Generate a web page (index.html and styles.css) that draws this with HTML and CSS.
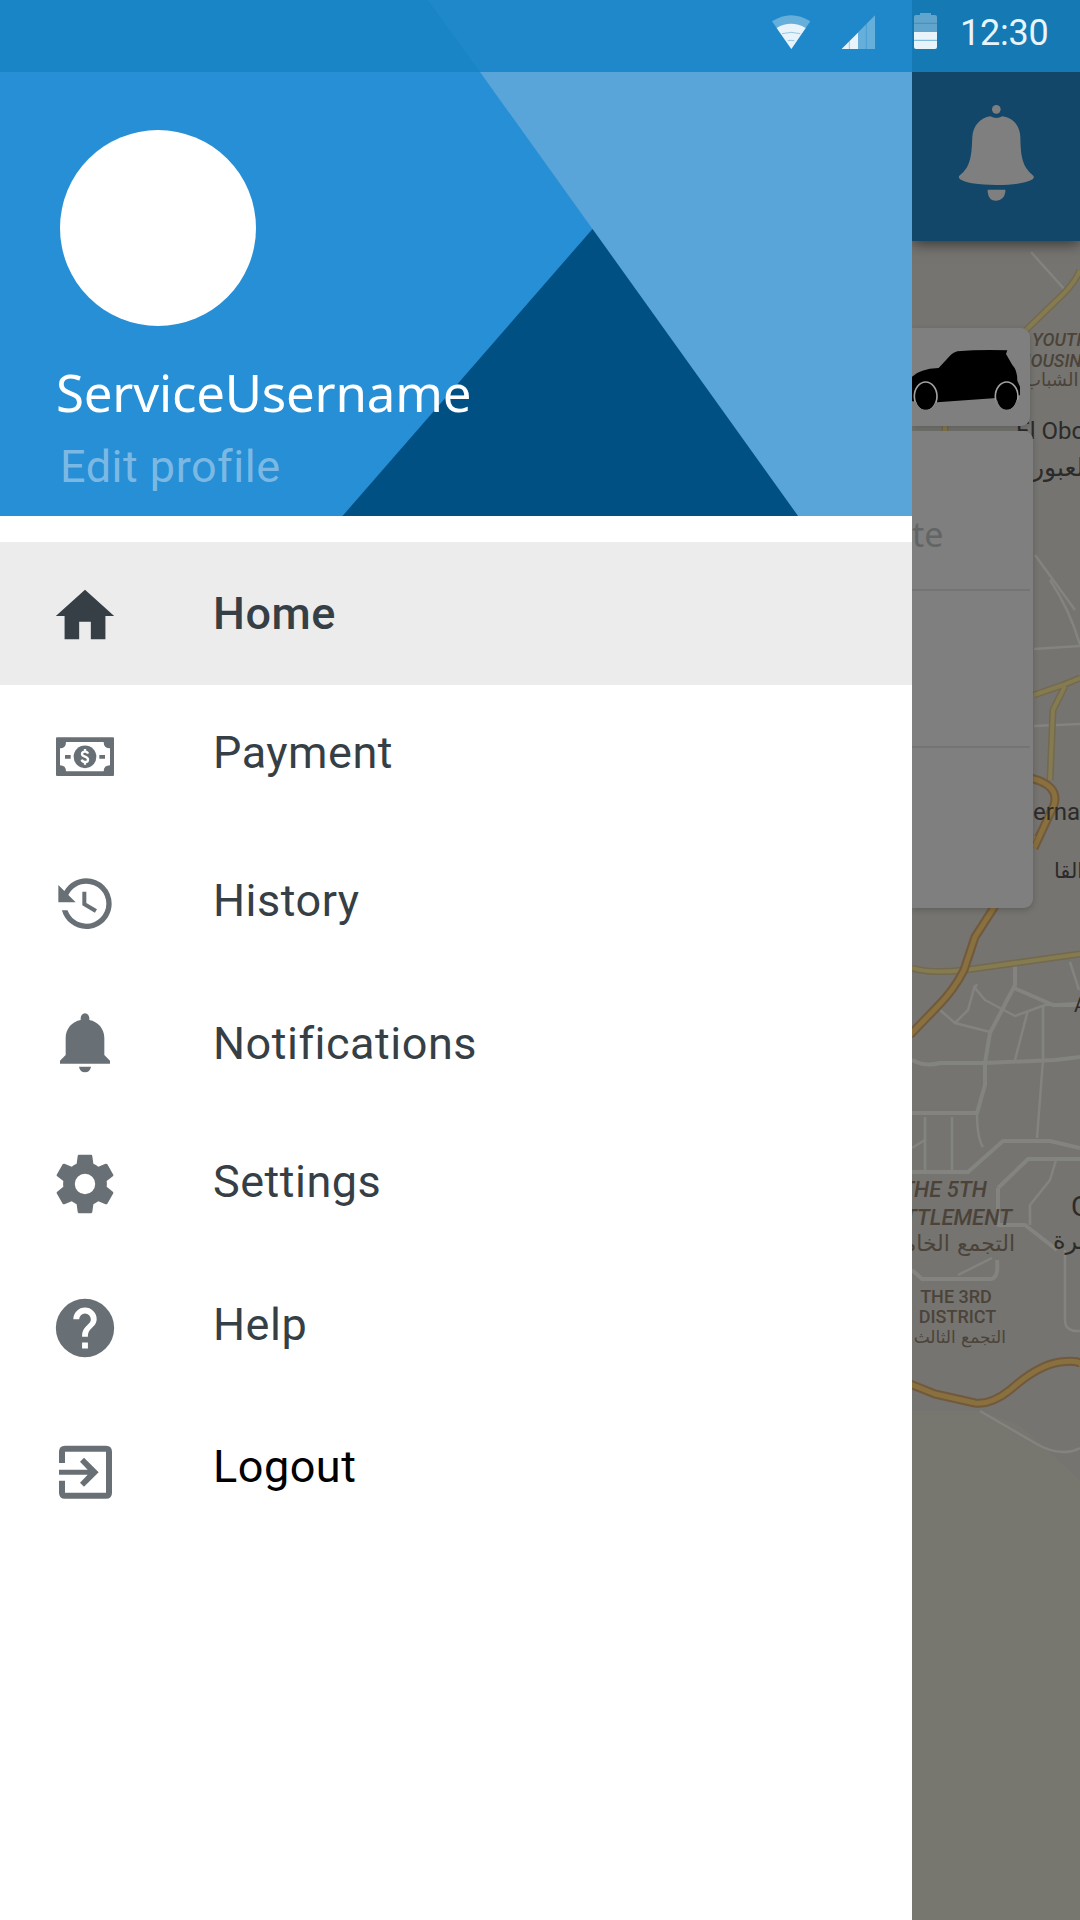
FILE: index.html
```html
<!DOCTYPE html>
<html lang="en">
<head>
<meta charset="utf-8">
<title>Navigation drawer</title>
<link rel="stylesheet" href="styles.css">
</head>
<body>
<div class="screen">
  <header class="status">
    <svg class="status-icons" viewBox="0 0 600 216">
      <g fill="#e8f3fa">
        <path opacity=".36" d="M96 64Q153 28 211 64L154 147Z"/>
        <path d="M110 84Q153 59 197 84L154 147Z"/>
        <path opacity=".36" d="M405 46V147H305Z"/>
        <path d="M354 98V147H305Z"/>
        <path opacity=".36" d="M540 39H573V45H585Q591 45 591 51V96H522V51Q522 45 528 45H540Z"/>
        <path d="M522 96H591V141Q591 147 585 147H528Q522 147 522 141Z"/>
      </g>
      <g fill="none" stroke="#1e86c6" stroke-width="2" opacity=".6">
        <path d="M126 101Q153 93 181 101M143 122Q153 120 163 122M328 124V147M379 72V147"/>
        <path stroke-width="3" d="M522 70H591M522 121H591"/>
      </g>
    </svg>
    <time class="clock">12:30</time>
  </header>

  <aside class="drawer">
    <section class="profile">
      <div class="avatar"></div>
      <h1 class="name">ServiceUsername</h1>
      <a class="edit">Edit profile</a>
    </section>
    <nav class="menu">
      <a class="item home">
        <svg class="icon" viewBox="0 0 24 24"><path d="M10 20V14H14V20H19V12H22L12 3 2 12H5V20Z"/></svg>
        <span class="label">Home</span>
      </a>
      <a class="item payment">
        <svg class="icon" viewBox="150 545 210 210">
          <path fill-rule="evenodd" d="M171 591H339Q342 591 342 594V704Q342 707 339 707H171Q168 707 168 704V594Q168 591 171 591ZM198 605Q198 624 180 624V675Q198 675 198 693H311Q311 675 330 675V624Q311 624 311 605Z"/>
          <path d="M195 644H212V655H195ZM298 644H315V655H298Z"/>
          <circle cx="255" cy="649.500" r="34"/>
          <path fill="none" stroke="#fff" stroke-width="7" d="M264 640Q262 634 255 634 246 634 246 641 246 646 255 649 264 652 264 658 264 665 255 665 247 665 245 658M255 626V635M255 664V673"/>
        </svg>
        <span class="label">Payment</span>
      </a>
      <a class="item history">
        <svg class="icon small" viewBox="0 0 24 24"><path d="M11 7V12.110L15.710 14.900 16.500 13.620 12.500 11.250V7M12.500 2C8.970 2 5.910 3.920 4.270 6.770L2 4.500V11H8.500L5.750 8.250C6.960 5.730 9.500 4 12.500 4A7.500 7.500 0 0 1 20 11.500 7.500 7.500 0 0 1 12.500 19C9.230 19 6.470 16.910 5.440 14H3.340C4.440 18.030 8.110 21 12.500 21 17.740 21 22 16.750 22 11.500A9.500 9.500 0 0 0 12.500 2Z"/></svg>
        <span class="label">History</span>
      </a>
      <a class="item notifications">
        <svg class="icon" viewBox="150 564 210 210"><path d="M255 580Q267 582 268 594V600C294 605 313 626 313 654V705L330 722V731H180V722L197 705V654C197 626 216 605 242 600V594Q243 582 255 580ZM237 740H273Q270 757 255 757T237 740Z"/></svg>
        <span class="label">Notifications</span>
      </a>
      <a class="item settings">
        <svg class="icon" viewBox="0 0 24 24"><path d="M12 15.500A3.500 3.500 0 0 1 8.500 12 3.500 3.500 0 0 1 12 8.500 3.500 3.500 0 0 1 15.500 12 3.500 3.500 0 0 1 12 15.500M19.430 12.970C19.470 12.650 19.500 12.330 19.500 12S19.470 11.340 19.430 11L21.540 9.370C21.730 9.220 21.780 8.950 21.660 8.730L19.660 5.270C19.540 5.050 19.270 4.960 19.050 5.050L16.560 6.050C16.040 5.660 15.500 5.320 14.870 5.070L14.500 2.420C14.460 2.180 14.250 2 14 2H10C9.750 2 9.540 2.180 9.500 2.420L9.130 5.070C8.500 5.320 7.960 5.660 7.440 6.050L4.950 5.050C4.730 4.960 4.460 5.050 4.340 5.270L2.340 8.730C2.210 8.950 2.270 9.220 2.460 9.370L4.570 11C4.530 11.340 4.500 11.670 4.500 12S4.530 12.650 4.570 12.970L2.460 14.630C2.270 14.780 2.210 15.050 2.340 15.270L4.340 18.730C4.460 18.950 4.730 19.030 4.950 18.950L7.440 17.940C7.960 18.340 8.500 18.680 9.130 18.930L9.500 21.580C9.540 21.820 9.750 22 10 22H14C14.250 22 14.460 21.820 14.500 21.580L14.870 18.930C15.500 18.670 16.040 18.340 16.560 17.940L19.050 18.950C19.270 19.030 19.540 18.950 19.660 18.730L21.660 15.270C21.780 15.050 21.730 14.780 21.540 14.630Z"/></svg>
        <span class="label">Settings</span>
      </a>
      <a class="item help">
        <svg class="icon" viewBox="0 0 24 24"><path d="M15.070 11.250L14.170 12.170C13.450 12.890 13 13.500 13 15H11V14.500C11 13.390 11.450 12.390 12.170 11.670L13.410 10.410C13.780 10.050 14 9.550 14 9A2 2 0 0 0 12 7 2 2 0 0 0 10 9H8A4 4 0 0 1 12 5 4 4 0 0 1 16 9C16 9.880 15.640 10.670 15.070 11.250M13 19H11V17H13M12 2A10 10 0 0 0 2 12 10 10 0 0 0 12 22 10 10 0 0 0 22 12 10 10 0 0 0 12 2Z"/></svg>
        <span class="label">Help</span>
      </a>
      <a class="item logout">
        <svg class="icon" viewBox="150 1009 210 210">
          <path d="M177 1087V1053Q177 1035 195 1035H318Q336 1035 336 1053V1176Q336 1194 318 1194H195Q177 1194 177 1176V1140H195V1176H318V1053H195V1087Z"/>
          <path d="M177 1107H263L240 1083 252 1071 296 1114.500 252 1158 240 1146 263 1122H177Z"/>
        </svg>
        <span class="label">Logout</span>
      </a>
    </nav>
  </aside>

  <main class="app">
    <div class="appbar">
      <svg class="bell" viewBox="650 310 236 300">
        <circle cx="768" cy="329" r="13"/>
        <path d="M750 350Q768 360 786 350C818 353 839 380 840 411C841 455 843 480 857 504Q866 518 879 528Q883 533 877 539Q850 556 768 556T659 539Q653 533 657 528Q670 518 679 504C693 480 694 455 696 411C698 380 720 353 750 350Z"/>
        <path d="M742 570H795V577Q791 602 768 603T742 577Z"/>
      </svg>
    </div>
    <div class="content">
      <svg class="map" viewBox="912 241 168 1679">
        <path fill="#757470" d="M912 241H1080V1480L1050 1452 1020 1425 980 1411H912Z"/>
        <g class="minor">
          <path d="M1031 252 1065 290M1035 555 1075 610M1050 580Q1070 610 1080 645M1034 649 1080 646M1034 726 1080 724"/>
          <path d="M977 984 975 988 985 1000 1015 1016 1045 1005 1080 1003M1014 988 1015 962M1070 962 1079 990" />
          <path stroke-width="4" d="M1015 965V985L990 1033 985 1063V1085L977 1113H912M1014 988 1053 1005H1080M912 1060Q925 1067 940 1063H985L1055 1060 1080 1057"/>
          <path d="M940 1010 955 1023 990 1032M1043 1005V1060L1037 1138M1028 1010 1015 1060M977 1113Q977 1138 983 1147M925 1117V1170M952 1117V1170M912 1148 925 1140M975 985 968 1010 955 1023"/>
          <path stroke-width="4" d="M912 1172H968L1003 1141H1050L1080 1148M998 1188 1028 1159H1080M998 1188V1225H1025L1057 1250M997 1260Q999 1279 990 1279H922L912 1270"/>
          <path d="M1056 1160 1050 1180 1030 1205V1225M958 1275 992 1258M1065 1250V1320Q1065 1332 1080 1331M980 1411 1035 1443Q1060 1458 1080 1448"/>
        </g>
        <g class="major">
          <path class="edge" d="M1080 270Q1075 284 1055 302L1026 330M1034 695 1063 685 1080 678M1065 686 1053 710 1050 780M912 968Q930 974 965 970L1080 954M945 426V432"/>
          <path d="M1080 270Q1075 284 1055 302L1026 330M1034 695 1063 685 1080 678M1065 686 1053 710 1050 780M912 968Q930 974 965 970L1080 954M945 426V432"/>
        </g>
        <g class="highway">
          <path class="edge" d="M1030 778Q1060 785 1054 805L1034 848M1034 835 993 909 975 937 964 970Q954 990 937 1007L910 1035M910 1384 935 1394 975 1403Q991 1405 1010 1390 1038 1365 1060 1362T1082 1367"/>
          <path d="M1030 778Q1060 785 1054 805L1034 848M1034 835 993 909 975 937 964 970Q954 990 937 1007L910 1035M910 1384 935 1394 975 1403Q991 1405 1010 1390 1038 1365 1060 1362T1082 1367"/>
        </g>
        <g class="area">
          <text x="1032" y="346" font-size="18">YOUTH</text>
          <text x="1018" y="367" font-size="18">HOUSING</text>
          <text x="987" y="1197" font-size="22" text-anchor="end">THE 5TH</text>
          <text x="1012" y="1225" font-size="22" text-anchor="end">SETTLEMENT</text>
          <text class="upright" x="956" y="1303" font-size="18" text-anchor="middle">THE 3RD</text>
          <text class="upright" x="957.500" y="1323" font-size="18" text-anchor="middle">DISTRICT</text>
          <text class="arabic" x="1015" y="1251" font-size="22" text-anchor="end">التجمع الخامس</text>
          <text class="arabic" x="1006" y="1343" font-size="17" text-anchor="end">التجمع الثالث</text>
          <text class="arabic" x="1024" y="386" font-size="18">إسكان الشباب</text>
        </g>
        <g class="city">
          <text x="1016" y="439" font-size="24">El Obour</text>
          <text x="1033" y="820" font-size="24">ernational</text>
          <text x="1071" y="1216" font-size="28">Cairo</text>
          <text x="1074" y="1012" font-size="20">A</text>
          <text class="arabic" x="1032" y="476" font-size="25">العبور</text>
          <text class="arabic" x="1100" y="878" font-size="21" text-anchor="end">ر القا</text>
          <text class="arabic" x="1053" y="1249" font-size="24">القاهرة</text>
        </g>
      </svg>
      <div class="cards">
        <div class="card vehicle">
          <svg class="car" viewBox="36 294 354 294">
            <path d="M30 448Q50 417 116 414L152 375Q160 367 172 364 240 358 322 361L318 372 337 405Q352 420 352 452L360 470V495L352 499 290 504 111 517 36 514Z"/>
            <g stroke="#a2a2a2" stroke-width="5"><ellipse cx="77" cy="499" rx="34" ry="43"/><ellipse cx="320" cy="499" rx="34" ry="43"/></g>
            <path fill="none" stroke="#7f7f7f" stroke-width="6" d="M45 515Q52 543 77 543T110 518M288 510Q296 543 320 543T353 510"/>
          </svg>
        </div>
        <div class="card form">
          <div class="field first">te</div>
          <div class="field second"></div>
          <div class="field"></div>
        </div>
      </div>
    </div>
  </main>
</div>
</body>
</html>
```
FILE: styles.css
```css
* { box-sizing: border-box; }
body { margin: 0; font-family: Roboto, sans-serif; }
.screen {
  width: 1080px;
  height: 1920px;
  display: grid;
  grid-template: 72px 1848px / 912px 168px;
  overflow: hidden;
}

.status {
  grid-column: 1 / 3;
  display: flex;
  align-items: center;
  padding-left: 740px;
  background:
    linear-gradient(#1579b3, #1579b3) 912px 0 / 168px 72px no-repeat,
    linear-gradient(54.16deg, #1985c7 50%, #1e88ca 50%) 428px 0 / 52px 72px no-repeat,
    linear-gradient(#1e88ca, #1e88ca) 480px 0 / 432px 72px no-repeat,
    #1985c7;
}
.status-icons { width: 200px; height: 72px; flex: none; }
.clock { margin-left: 20px; font-size: 36px; line-height: 72px; color: #e8f3fa; padding-top: 0; letter-spacing: -.2px; margin-top: -6px; }

.drawer { background: #fff; display: flex; flex-direction: column; }
.profile {
  position: relative;
  isolation: isolate;
  height: 444px;
  padding: 58px 0 0 60px;
  background: #268fd5;
  color: #fff;
}
.profile::before, .profile::after { content: ""; position: absolute; inset: 0; z-index: -1; }
.profile::before { background: #59a4d8; clip-path: polygon(480px 0, 100% 0, 100% 100%, 798px 100%); }
.profile::after { background: #005083; clip-path: polygon(592.5px 157px, 798px 100%, 342.5px 100%); }
.avatar { width: 196px; height: 196px; border-radius: 50%; background: #fff; }
.name {
  margin: 30px 0 0 -4px;
  font: 400 51px/72px "Noto Sans", sans-serif;
  letter-spacing: -.2px;
}
.edit { display: block; margin-top: 12px; font-size: 45px; line-height: 54px; letter-spacing: .5px; color: #7bb9e4; }

.menu { padding-top: 26px; }
.item {
  display: flex;
  align-items: center;
  gap: 93px;
  padding-left: 50px;
  color: #363f45;
  font-size: 45px;
  line-height: 54px;
  letter-spacing: .5px;
}
.icon { width: 70px; height: 70px; flex: none; fill: #687075; }
.icon.small { width: 64px; height: 64px; margin: 7px 3px 0; }
.home { height: 143px; background: #ececec; font-weight: 500; }
.home .icon { fill: #363f45; margin-top: 5px; }
.payment { height: 136px; }
.payment .icon { margin-top: 7px; }
.history { height: 160px; }
.notifications { height: 126px; }
.notifications .icon { margin-top: -2px; }
.settings { height: 150px; }
.settings .icon { margin-top: 3px; }
.help { height: 136px; }
.help .icon { margin-top: 6px; }
.logout { height: 148px; }
.logout .icon { margin-top: 9px; }
.logout .label { color: #000; }

.app { display: flex; flex-direction: column; overflow: hidden; background: #77766f; }
.appbar {
  height: 169px;
  flex: none;
  padding: 31px 0 0 45px;
  background: #124769;
  box-shadow: 0 2px 14px rgba(0, 0, 0, .6);
  z-index: 1;
}
.bell { display: block; width: 78.67px; height: 100px; fill: #7f7f7f; }
.content { display: grid; grid-template: 1679px / 168px; }
.map { grid-area: 1 / 1; width: 168px; height: 1679px; }
.map path { stroke-linejoin: round; }
.minor { fill: none; stroke: #83837f; stroke-width: 2.5; }
.major { fill: none; stroke: #857b50; stroke-width: 4; }
.major .edge { stroke: #74694e; stroke-width: 7; }
.highway { fill: none; stroke: #88703f; stroke-width: 5; }
.highway .edge { stroke: #72593c; stroke-width: 9; }
.area { fill: #4b4339; font-weight: 500; font-style: italic; }
.city { fill: #2c2b29; }
.upright { font-style: normal; }
.arabic { font-family: "DejaVu Sans", sans-serif; font-style: normal; font-weight: 400; }

.cards { grid-area: 1 / 1; display: flex; flex-direction: column; gap: 5px; padding-top: 87px; z-index: 0; }
.card { background: #7f7f7f; box-shadow: 0 2px 6px rgba(0, 0, 0, .2); }
.vehicle { width: 118px; height: 98px; border-radius: 0 9px 9px 0; }
.car { display: block; width: 118px; height: 98px; }
.form { width: 121px; height: 477px; padding-right: 3px; border-radius: 0 9px 9px 0; }
.field { height: 158px; }
.first {
  padding: 80px 0 0;
  font: 34px/46px "Noto Sans", sans-serif;
  color: #626565;
  height: 160px;
  border-bottom: 2px solid #747474;
}
.second { height: 157px; border-bottom: 2px solid #747474; }
```
